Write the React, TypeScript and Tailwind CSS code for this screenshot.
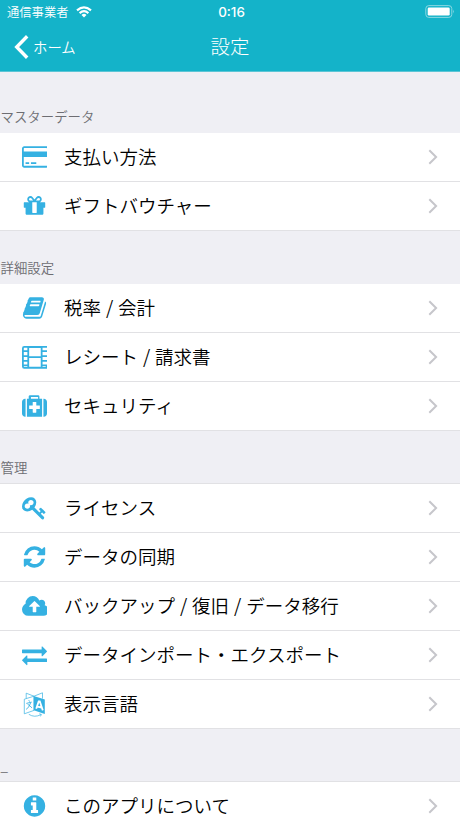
import React from 'react';

const paths = {
  card: 'M1760 128q66 0 113 47t47 113v1216q0 66-47 113t-113 47h-1600q-66 0-113-47t-47-113v-1216q0-66 47-113t113-47h1600zm-1600 128q-13 0-22.5 9.5t-9.5 22.5v224h1664v-224q0-13-9.5-22.5t-22.5-9.5h-1600zm1600 1280q13 0 22.5-9.5t9.5-22.5v-608h-1664v608q0 13 9.5 22.5t22.5 9.5h1600zm-1504-128v-128h256v128h-256zm384 0v-128h384v128h-384z',
  gift: 'M1056 1356v-716h-320v716q0 25 18 38.5t46 13.5h192q28 0 46-13.5t18-38.5zm-456-844h195l-126-161q-26-31-69-31-40 0-68 28t-28 68 28 68 68 28zm688-96q0-40-28-68t-68-28q-43 0-69 31l-125 161h194q40 0 68-28t28-68zm376 256v320q0 14-9 23t-23 9h-96v416q0 40-28 68t-68 28h-1088q-40 0-68-28t-28-68v-416h-96q-14 0-23-9t-9-23v-320q0-14 9-23t23-9h440q-93 0-158.5-65.5t-65.5-158.5 65.5-158.5 158.5-65.5q107 0 168 77l128 165 128-165q61-77 168-77 93 0 158.5 65.5t65.5 158.5-65.5 158.5-158.5 65.5h440q14 0 23 9t9 23z',
  book: 'M1703 478q40 57 18 129l-275 906q-19 64-76.5 107.5t-122.5 43.5h-923q-77 0-148.5-53.5t-99.5-131.5q-24-67-2-127 0-4 3-27t4-37q1-8-3-21.5t-3-19.5q2-11 8-21t16.5-23.5 16.5-23.5q23-38 45-91.5t30-91.5q3-10 .5-30t-.5-28q3-11 17-28t17-23q21-36 42-92t25-90q1-9-2.5-32t.5-28q4-13 22-30.5t22-22.5q19-26 42.5-84.5t27.5-96.5q1-8-3-25.5t-2-26.5q2-8 9-18t18-23 17-21q8-12 16.5-30.5t15-35 16-36 19.5-32 26.5-23.5 36-11.5 47.5 5.5l-1 3q38-9 51-9h761q74 0 114 56t18 130l-274 906q-36 119-71.5 153.5t-128.5 34.5h-869q-27 0-38 15-11 16-1 43 24 70 144 70h923q29 0 56-15.5t35-41.5l300-987q7-22 5-57 38 15 59 43zm-1064 2q-4 13 2 22.5t20 9.5h608q13 0 25.5-9.5t16.5-22.5l21-64q4-13-2-22.5t-20-9.5h-608q-13 0-25.5 9.5t-16.5 22.5zm-83 256q-4 13 2 22.5t20 9.5h608q13 0 25.5-9.5t16.5-22.5l21-64q4-13-2-22.5t-20-9.5h-608q-13 0-25.5 9.5t-16.5 22.5z',
  film: 'M160 110H1920V1750H160Q0 1750 0 1590V270Q0 110 160 110zM128 270V416H384V246H160Q128 246 128 270zM128 544V768H384V544zM128 896V1120H384V896zM128 1248V1440H384V1248zM128 1568Q128 1610 160 1610H384V1568zM512 256V842H1344V256zM512 980V1600H1344V980zM1472 246V416H1700V246zM1472 544V768H1700V544zM1472 896V1120H1700V896zM1472 1248V1440H1700V1248zM1472 1568V1610H1700V1568zM1700 246H1792V416H1700zM1700 544H1792V768H1700zM1700 896H1792V1120H1700zM1700 1248H1792V1440H1700z',
  medkit: 'M1280 1088v-192q0-14-9-23t-23-9h-224v-224q0-14-9-23t-23-9h-192q-14 0-23 9t-9 23v224h-224q-14 0-23 9t-9 23v192q0 14 9 23t23 9h224v224q0 14 9 23t23 9h192q14 0 23-9t9-23v-224h224q14 0 23-9t9-23zm-640-704h512v-128h-512v128zm-384 0v1280h-32q-92 0-158-66t-66-158v-832q0-92 66-158t158-66h32zm1184 0v1280h-1088v-1280h128v-160q0-40 28-68t68-28h576q40 0 68 28t28 68v160h128zm352 224v832q0 92-66 158t-158 66h-32v-1280h32q92 0 158 66t66 158z',
  key: 'M832 512q0-80-56-136t-136-56-136 56-56 136q0 42 19 83-41-19-83-19-80 0-136 56t-56 136 56 136 136 56 136-56 56-136q0-42-19-83 41 19 83 19 80 0 136-56t56-136zm851 704q0 17-49 66t-66 49q-9 0-28.5-16t-36.5-33-38.5-40-24.5-26l-96 96 220 220q28 28 28 68 0 42-39 81t-81 39q-40 0-68-28l-671-671q-176 131-365 131-163 0-265.5-102.5t-102.5-265.5q0-160 95-313t248-248 313-95q163 0 265.5 102.5t102.5 265.5q0 189-131 365l355 355 96-96q-3-3-26-24.5t-40-38.5-33-36.5-16-28.5q0-17 49-66t66-49q13 0 23 10 6 6 46 44.5t82 79.5 86.5 86 73 78 28.5 41z',
  refresh: 'M1639 1056q0 5-1 7-64 268-268 434.5t-478 166.5q-146 0-282.5-55t-243.5-157l-129 129q-19 19-45 19t-45-19-19-45v-448q0-26 19-45t45-19h448q26 0 45 19t19 45-19 45l-137 137q71 66 161 102t187 36q134 0 250-65t186-179q11-17 53-117 8-23 30-23h192q13 0 22.5 9.5t9.5 22.5zm25-800v448q0 26-19 45t-45 19h-448q-26 0-45-19t-19-45 19-45l138-138q-148-137-349-137-134 0-250 65t-186 179q-11 17-53 117-8 23-30 23h-199q-13 0-22.5-9.5t-9.5-22.5v-7q65-268 270-434.5t480-166.5q146 0 284 55.5t245 156.5l130-129q19-19 45-19t45 19 19 45z',
  cloud: 'M1280 928q0-14-9-23l-352-352q-9-9-23-9t-23 9l-351 351q-10 12-10 24 0 14 9 23t23 9h224v352q0 13 9.5 22.5t22.5 9.5h192q13 0 22.5-9.5t9.5-22.5v-352h224q13 0 22.5-9.5t9.5-22.5zm640 288q0 159-112.5 271.5t-271.5 112.5h-1088q-185 0-316.5-131.5t-131.5-316.5q0-130 70-240t188-165q-2-30-2-43 0-212 150-362t362-150q156 0 285.5 87t188.5 231q71-62 166-62 106 0 181 75t75 181q0 76-41 138 130 31 213.5 135.5t83.5 238.5z',
  exchange: 'M1792 1184v192q0 13-9.5 22.5t-22.5 9.5h-1376v192q0 13-9.5 22.5t-22.5 9.5q-12 0-24-10l-319-320q-9-9-9-22 0-14 9-23l320-320q9-9 23-9 13 0 22.5 9.5t9.5 22.5v192h1376q13 0 22.5 9.5t9.5 22.5zm0-544q0 14-9 23l-320 320q-9 9-23 9-13 0-22.5-9.5t-9.5-22.5v-192h-1376q-13 0-22.5-9.5t-9.5-22.5v-192q0-13 9.5-22.5t22.5-9.5h1376v-192q0-14 9-23t23-9q12 0 24 10l319 319q9 9 9 23z',
  info: 'M1152 1376v-160q0-14-9-23t-23-9h-96v-512q0-14-9-23t-23-9h-320q-14 0-23 9t-9 23v160q0 14 9 23t23 9h96v320h-96q-14 0-23 9t-9 23v160q0 14 9 23t23 9h448q14 0 23-9t9-23zm-128-896v-160q0-14-9-23t-23-9h-192q-14 0-23 9t-9 23v160q0 14 9 23t23 9h192q14 0 23-9t9-23zm640 416q0 209-103 385.5t-279.5 279.5-385.5 103-385.5-103-279.5-279.5-103-385.5 103-385.5 279.5-279.5 385.5-103 385.5 103 279.5 279.5 103 385.5z',
};

type IconName = keyof typeof paths | 'language';

function LanguageIcon() {
  return (
    <svg viewBox="0 0 25 25" className="h-[25px] w-[25px] shrink-0" fill="none" stroke="#35b1e2">
      <path d="M2.3 7.2 12 4.2V18.4L2.3 21.8zM4.2 6.2V1.2L12 4.2 20.5.8V6.6" strokeWidth=".7" />
      <path d="M11.7 3.9 22.8 7.4V22L11.7 18.3z" fill="#35b1e2" stroke="none" />
      <path d="m6.8 8.2.8 1.4M4.3 11.4l5.4-1.3M8.7 10.6Q7.4 15.6 4.1 17.4M5.6 12.3Q7.8 13.2 9.9 15.9" strokeWidth=".9" />
      <path d="m14.2 16.8 2.5-7.4h1.1l3 9M15.2 14.6l4.4.9" stroke="#fff" strokeWidth="1.8" />
      <path d="M6.8 22.3Q12.5 26 19 22.6M17.3 21.8l2.1.6-.9 2" strokeWidth=".7" />
    </svg>
  );
}

function RowIcon({ name }: { name: IconName }) {
  if (name === 'language') return <LanguageIcon />;
  return (
    <svg viewBox="0 40 1792 1792" className="h-[25px] w-[25px] shrink-0 overflow-hidden" fill="#35b1e2">
      <path fillRule={name === 'film' ? 'evenodd' : 'nonzero'} d={paths[name]} />
    </svg>
  );
}

function Row({ icon, label }: { icon: IconName; label: string }) {
  return (
    <li className="flex h-[49px] items-center border-b border-[#e1e1e4] bg-white pr-[22px] pl-[22px]">
      <RowIcon name={icon} />
      <span className="mb-[2px] ml-[17px] flex-1 text-[18.5px] leading-6 font-[350] [word-spacing:0.8px] whitespace-nowrap text-black">
        {label}
      </span>
      <svg viewBox="0 0 10 16" className="h-4 w-[10px]" fill="none" stroke="#c6c6cb" strokeWidth="2">
        <path d="m1.3 1.3 6.8 6.7-6.8 6.7" />
      </svg>
    </li>
  );
}

interface SectionProps {
  title: string;
  header: string;
  rows: [IconName, string][];
}

function Section({ title, header, rows }: SectionProps) {
  return (
    <section>
      <h2 className={`flex items-end pl-[0.6px] text-[13.4px] leading-5 font-[350] text-[#6d6d72] ${header}`}>{title}</h2>
      <ul>
        {rows.map(([icon, label]) => (
          <Row key={label} icon={icon} label={label} />
        ))}
      </ul>
    </section>
  );
}

export default function App() {
  return (
    <div className="h-[818px] w-[460px] overflow-hidden bg-[#efeff4] font-['Noto_Sans_CJK_JP',sans-serif]">
      <header className="h-[72px] border-b border-[#5cc5d5] bg-[#14b3c9] text-white">
        <div className="grid h-6 grid-cols-3 items-center pr-[5px] pl-[7px]">
          <div className="flex items-center gap-[7px]">
            <span className="text-[12.3px] leading-5 font-[350]">通信事業者</span>
            <svg viewBox="0 0 16 12" className="h-3 w-4" fill="none" stroke="#fff" strokeWidth="2.1">
              <path d="M1 4.4Q8-1.8 15 4.4M3.6 7.1Q8 3.3 12.4 7.1" />
              <path d="M5.5 8.9Q8 6.8 10.5 8.9L8 11.5z" fill="#fff" stroke="none" />
            </svg>
          </div>
          <span className="pl-[1px] text-center font-[Inter,sans-serif] text-[13.4px] leading-5 font-medium">0:16</span>
          <svg viewBox="0 0 30 14" className="h-[14px] w-[30px] justify-self-end">
            <rect x=".8" y=".6" width="26" height="11.8" rx="3" fill="none" stroke="#8bd8e2" />
            <rect x="2.7" y="2.5" width="22" height="8" rx="1.3" fill="#fff" />
            <path d="M28.2 4.6Q29.8 6.5 28.2 8.4z" fill="#8bd8e2" />
          </svg>
        </div>
        <div className="grid h-[46px] grid-cols-3 items-center px-[14px]">
          <div className="flex items-center gap-[5px]">
            <svg viewBox="0 0 15 24" className="h-6 w-[15px]" fill="none" stroke="#fff" strokeWidth="3.4">
              <path d="M13.2 1.2 2.7 12l10.5 10.8" />
            </svg>
            <span className="-ml-px text-[14.4px] leading-6 font-[350]">ホーム</span>
          </div>
          <h1 className="mb-[2px] text-center text-[19.4px] leading-6 font-light">設定</h1>
        </div>
      </header>
      <Section title="マスターデータ" header="h-[61px] pb-[7px]" rows={[['card', '支払い方法'], ['gift', 'ギフトバウチャー']]} />
      <Section
        title="詳細設定"
        header="h-[53px] pb-[7px]"
        rows={[['book', '税率 / 会計'], ['film', 'レシート / 請求書'], ['medkit', 'セキュリティ']]}
      />
      <Section
        title="管理"
        header="h-[53px] border-b border-[#e1e1e4] pb-[6px]"
        rows={[
          ['key', 'ライセンス'],
          ['refresh', 'データの同期'],
          ['cloud', 'バックアップ / 復旧 / データ移行'],
          ['exchange', 'データインポート・エクスポート'],
          ['language', '表示言語'],
        ]}
      />
      <Section title="_" header="h-[53px] border-b border-[#e1e1e4] pb-[6px]" rows={[['info', 'このアプリについて']]} />
    </div>
  );
}
